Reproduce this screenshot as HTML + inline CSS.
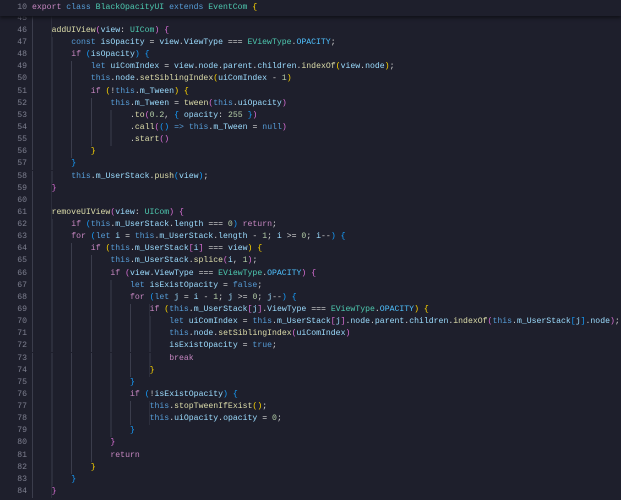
<!DOCTYPE html>
<html><head><meta charset="utf-8"><style>
html,body{margin:0;padding:0;}
body{width:621px;height:500px;overflow:hidden;background:#1e1f2c;font-family:"Liberation Mono",monospace;font-size:8.17px;color:#9cdcfe;position:relative;}
.l{position:absolute;left:0;height:12.13px;line-height:12.13px;white-space:pre;width:621px;}
.n{position:absolute;left:0;width:27px;text-align:right;color:#7d7f8f;}
.c{position:absolute;left:32px;}
.g{position:absolute;left:32px;top:0;height:12.13px;background:repeating-linear-gradient(to right,#3b3d4c 0 1px,transparent 1px 19.6px);}
.k{color:#c586c0}.s{color:#569cd6}.f{color:#dcdcaa}.t{color:#4ec9b0}.o{color:#d4d4d4}.m{color:#b5cea8}.q{color:#4fc1ff}
.b1{color:#ffd700}.b2{color:#da70d6}.b3{color:#179fff}
#hd{position:absolute;left:0;top:0;width:621px;height:16px;background:#1e1f2c;box-shadow:0 2px 3px #111218;z-index:2;}
</style></head><body>
<div id="hd"><div class="l" style="top:2px"><span class="n">10</span><span class="c"><span class="k">export</span> <span class="s">class</span> <span class="t">BlackOpacityUI</span> <span class="s">extends</span> <span class="t">EventCom</span> <span class="b1">{</span></span></div></div>

<div class="l" style="top:12.8px"><span class="n">45</span><span class="g" style="width:19.6px"></span></div>
<div class="l" style="top:24.9px"><span class="n">46</span><span class="g" style="width:19.6px"></span><span class="c" style="left:51.6px"><span class="f">addUIView</span><span class="b2">(</span>view<span class="o">: </span><span class="t">UICom</span><span class="b2">)</span> <span class="b2">{</span></span></div>
<div class="l" style="top:37.0px"><span class="n">47</span><span class="g" style="width:39.2px"></span><span class="c" style="left:71.2px"><span class="s">const</span> isOpacity <span class="o">=</span> view<span class="o">.</span>ViewType <span class="o">===</span> <span class="t">EViewType</span><span class="o">.</span><span class="q">OPACITY</span><span class="o">;</span></span></div>
<div class="l" style="top:49.2px"><span class="n">48</span><span class="g" style="width:39.2px"></span><span class="c" style="left:71.2px"><span class="k">if</span> <span class="b3">(</span>isOpacity<span class="b3">)</span> <span class="b3">{</span></span></div>
<div class="l" style="top:61.3px"><span class="n">49</span><span class="g" style="width:58.8px"></span><span class="c" style="left:90.8px"><span class="s">let</span> uiComIndex <span class="o">=</span> view<span class="o">.</span>node<span class="o">.</span>parent<span class="o">.</span>children<span class="o">.</span><span class="f">indexOf</span><span class="b1">(</span>view<span class="o">.</span>node<span class="b1">)</span><span class="o">;</span></span></div>
<div class="l" style="top:73.4px"><span class="n">50</span><span class="g" style="width:58.8px"></span><span class="c" style="left:90.8px"><span class="s">this</span><span class="o">.</span>node<span class="o">.</span><span class="f">setSiblingIndex</span><span class="b1">(</span>uiComIndex <span class="o">-</span> <span class="m">1</span><span class="b1">)</span></span></div>
<div class="l" style="top:85.6px"><span class="n">51</span><span class="g" style="width:58.8px"></span><span class="c" style="left:90.8px"><span class="k">if</span> <span class="b1">(</span><span class="o">!</span><span class="s">this</span><span class="o">.</span>m_Tween<span class="b1">)</span> <span class="b1">{</span></span></div>
<div class="l" style="top:97.7px"><span class="n">52</span><span class="g" style="width:78.4px"></span><span class="c" style="left:110.4px"><span class="s">this</span><span class="o">.</span>m_Tween <span class="o">=</span> <span class="f">tween</span><span class="b2">(</span><span class="s">this</span><span class="o">.</span>uiOpacity<span class="b2">)</span></span></div>
<div class="l" style="top:109.8px"><span class="n">53</span><span class="g" style="width:98px"></span><span class="c" style="left:130px"><span class="o">.</span><span class="f">to</span><span class="b2">(</span><span class="m">0.2</span><span class="o">, </span><span class="b3">{</span> opacity<span class="o">: </span><span class="m">255</span> <span class="b3">}</span><span class="b2">)</span></span></div>
<div class="l" style="top:121.9px"><span class="n">54</span><span class="g" style="width:98px"></span><span class="c" style="left:130px"><span class="o">.</span><span class="f">call</span><span class="b2">(</span><span class="b3">()</span> <span class="s">=&gt;</span> <span class="s">this</span><span class="o">.</span>m_Tween <span class="o">=</span> <span class="s">null</span><span class="b2">)</span></span></div>
<div class="l" style="top:134.1px"><span class="n">55</span><span class="g" style="width:98px"></span><span class="c" style="left:130px"><span class="o">.</span><span class="f">start</span><span class="b2">()</span></span></div>
<div class="l" style="top:146.2px"><span class="n">56</span><span class="g" style="width:58.8px"></span><span class="c" style="left:90.8px"><span class="b1">}</span></span></div>
<div class="l" style="top:158.3px"><span class="n">57</span><span class="g" style="width:39.2px"></span><span class="c" style="left:71.2px"><span class="b3">}</span></span></div>
<div class="l" style="top:170.5px"><span class="n">58</span><span class="g" style="width:39.2px"></span><span class="c" style="left:71.2px"><span class="s">this</span><span class="o">.</span>m_UserStack<span class="o">.</span><span class="f">push</span><span class="b3">(</span>view<span class="b3">)</span><span class="o">;</span></span></div>
<div class="l" style="top:182.6px"><span class="n">59</span><span class="g" style="width:19.6px"></span><span class="c" style="left:51.6px"><span class="b2">}</span></span></div>
<div class="l" style="top:194.7px"><span class="n">60</span><span class="g" style="width:19.6px"></span></div>
<div class="l" style="top:206.9px"><span class="n">61</span><span class="g" style="width:19.6px"></span><span class="c" style="left:51.6px"><span class="f">removeUIView</span><span class="b2">(</span>view<span class="o">: </span><span class="t">UICom</span><span class="b2">)</span> <span class="b2">{</span></span></div>
<div class="l" style="top:219.0px"><span class="n">62</span><span class="g" style="width:39.2px"></span><span class="c" style="left:71.2px"><span class="k">if</span> <span class="b3">(</span><span class="s">this</span><span class="o">.</span>m_UserStack<span class="o">.</span>length <span class="o">===</span> <span class="m">0</span><span class="b3">)</span> <span class="k">return</span><span class="o">;</span></span></div>
<div class="l" style="top:231.1px"><span class="n">63</span><span class="g" style="width:39.2px"></span><span class="c" style="left:71.2px"><span class="k">for</span> <span class="b3">(</span><span class="s">let</span> i <span class="o">=</span> <span class="s">this</span><span class="o">.</span>m_UserStack<span class="o">.</span>length <span class="o">-</span> <span class="m">1</span><span class="o">;</span> i <span class="o">&gt;=</span> <span class="m">0</span><span class="o">;</span> i<span class="o">--</span><span class="b3">)</span> <span class="b3">{</span></span></div>
<div class="l" style="top:243.3px"><span class="n">64</span><span class="g" style="width:58.8px"></span><span class="c" style="left:90.8px"><span class="k">if</span> <span class="b1">(</span><span class="s">this</span><span class="o">.</span>m_UserStack<span class="b2">[</span>i<span class="b2">]</span> <span class="o">===</span> view<span class="b1">)</span> <span class="b1">{</span></span></div>
<div class="l" style="top:255.4px"><span class="n">65</span><span class="g" style="width:78.4px"></span><span class="c" style="left:110.4px"><span class="s">this</span><span class="o">.</span>m_UserStack<span class="o">.</span><span class="f">splice</span><span class="b2">(</span>i<span class="o">, </span><span class="m">1</span><span class="b2">)</span><span class="o">;</span></span></div>
<div class="l" style="top:267.5px"><span class="n">66</span><span class="g" style="width:78.4px"></span><span class="c" style="left:110.4px"><span class="k">if</span> <span class="b2">(</span>view<span class="o">.</span>ViewType <span class="o">===</span> <span class="t">EViewType</span><span class="o">.</span><span class="q">OPACITY</span><span class="b2">)</span> <span class="b2">{</span></span></div>
<div class="l" style="top:279.7px"><span class="n">67</span><span class="g" style="width:98px"></span><span class="c" style="left:130px"><span class="s">let</span> isExistOpacity <span class="o">=</span> <span class="s">false</span><span class="o">;</span></span></div>
<div class="l" style="top:291.8px"><span class="n">68</span><span class="g" style="width:98px"></span><span class="c" style="left:130px"><span class="k">for</span> <span class="b3">(</span><span class="s">let</span> j <span class="o">=</span> i <span class="o">-</span> <span class="m">1</span><span class="o">;</span> j <span class="o">&gt;=</span> <span class="m">0</span><span class="o">;</span> j<span class="o">--</span><span class="b3">)</span> <span class="b3">{</span></span></div>
<div class="l" style="top:303.9px"><span class="n">69</span><span class="g" style="width:117.6px"></span><span class="c" style="left:149.6px"><span class="k">if</span> <span class="b1">(</span><span class="s">this</span><span class="o">.</span>m_UserStack<span class="b2">[</span>j<span class="b2">]</span><span class="o">.</span>ViewType <span class="o">===</span> <span class="t">EViewType</span><span class="o">.</span><span class="q">OPACITY</span><span class="b1">)</span> <span class="b1">{</span></span></div>
<div class="l" style="top:316.1px"><span class="n">70</span><span class="g" style="width:137.2px"></span><span class="c" style="left:169.2px"><span class="s">let</span> uiComIndex <span class="o">=</span> <span class="s">this</span><span class="o">.</span>m_UserStack<span class="b2">[</span>j<span class="b2">]</span><span class="o">.</span>node<span class="o">.</span>parent<span class="o">.</span>children<span class="o">.</span><span class="f">indexOf</span><span class="b2">(</span><span class="s">this</span><span class="o">.</span>m_UserStack<span class="b3">[</span>j<span class="b3">]</span><span class="o">.</span>node<span class="b2">)</span><span class="o">;</span></span></div>
<div class="l" style="top:328.2px"><span class="n">71</span><span class="g" style="width:137.2px"></span><span class="c" style="left:169.2px"><span class="s">this</span><span class="o">.</span>node<span class="o">.</span><span class="f">setSiblingIndex</span><span class="b2">(</span>uiComIndex<span class="b2">)</span></span></div>
<div class="l" style="top:340.3px"><span class="n">72</span><span class="g" style="width:137.2px"></span><span class="c" style="left:169.2px">isExistOpacity <span class="o">=</span> <span class="s">true</span><span class="o">;</span></span></div>
<div class="l" style="top:352.5px"><span class="n">73</span><span class="g" style="width:137.2px"></span><span class="c" style="left:169.2px"><span class="k">break</span></span></div>
<div class="l" style="top:364.6px"><span class="n">74</span><span class="g" style="width:117.6px"></span><span class="c" style="left:149.6px"><span class="b1">}</span></span></div>
<div class="l" style="top:376.7px"><span class="n">75</span><span class="g" style="width:98px"></span><span class="c" style="left:130px"><span class="b3">}</span></span></div>
<div class="l" style="top:388.9px"><span class="n">76</span><span class="g" style="width:98px"></span><span class="c" style="left:130px"><span class="k">if</span> <span class="b3">(</span><span class="o">!</span>isExistOpacity<span class="b3">)</span> <span class="b3">{</span></span></div>
<div class="l" style="top:401.0px"><span class="n">77</span><span class="g" style="width:117.6px"></span><span class="c" style="left:149.6px"><span class="s">this</span><span class="o">.</span><span class="f">stopTweenIfExist</span><span class="b1">()</span><span class="o">;</span></span></div>
<div class="l" style="top:413.1px"><span class="n">78</span><span class="g" style="width:117.6px"></span><span class="c" style="left:149.6px"><span class="s">this</span><span class="o">.</span>uiOpacity<span class="o">.</span>opacity <span class="o">=</span> <span class="m">0</span><span class="o">;</span></span></div>
<div class="l" style="top:425.3px"><span class="n">79</span><span class="g" style="width:98px"></span><span class="c" style="left:130px"><span class="b3">}</span></span></div>
<div class="l" style="top:437.4px"><span class="n">80</span><span class="g" style="width:78.4px"></span><span class="c" style="left:110.4px"><span class="b2">}</span></span></div>
<div class="l" style="top:449.5px"><span class="n">81</span><span class="g" style="width:78.4px"></span><span class="c" style="left:110.4px"><span class="k">return</span></span></div>
<div class="l" style="top:461.7px"><span class="n">82</span><span class="g" style="width:58.8px"></span><span class="c" style="left:90.8px"><span class="b1">}</span></span></div>
<div class="l" style="top:473.8px"><span class="n">83</span><span class="g" style="width:39.2px"></span><span class="c" style="left:71.2px"><span class="b3">}</span></span></div>
<div class="l" style="top:485.9px"><span class="n">84</span><span class="g" style="width:19.6px"></span><span class="c" style="left:51.6px"><span class="b2">}</span></span></div>
</body></html>
